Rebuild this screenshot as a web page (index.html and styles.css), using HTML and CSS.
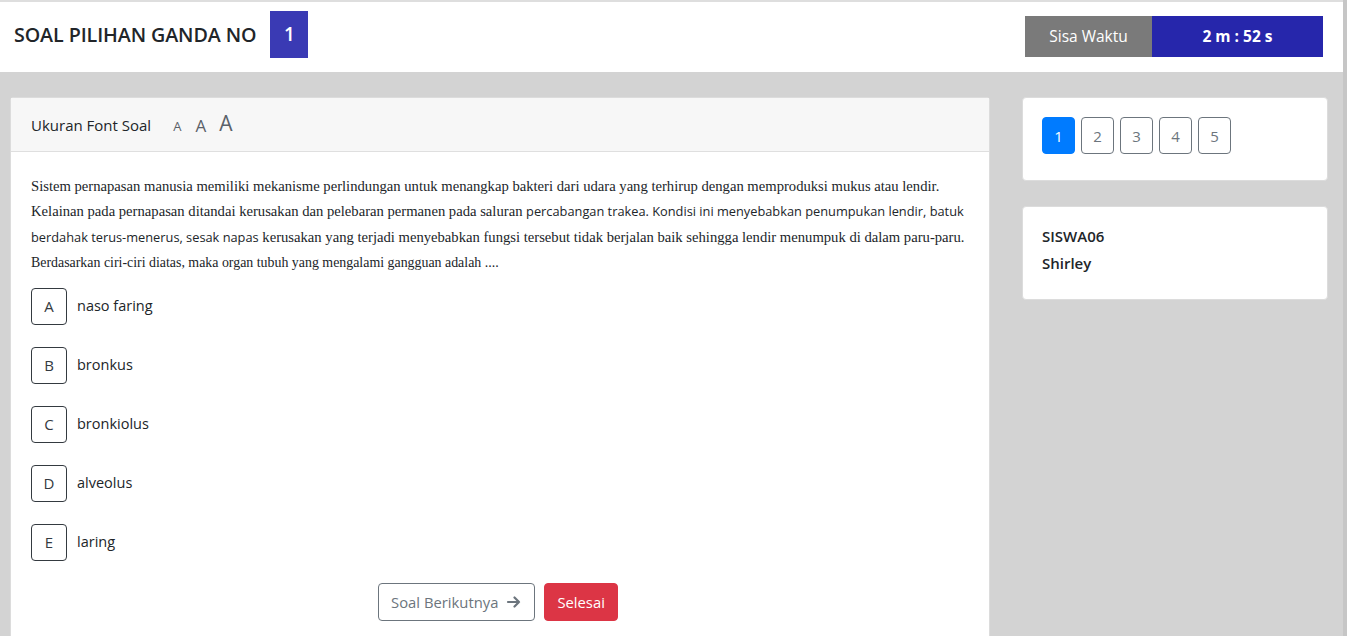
FILE: index.html
```html
<!DOCTYPE html>
<html lang="id">
<head>
    <meta charset="UTF-8">
    <meta name="viewport" content="width=device-width, initial-scale=1.0">
    <title>Ujian - Soal Pilihan Ganda</title>
    <link rel="stylesheet" href="styles.css">
</head>
<body>
    <div id="top-bar">
        <div class="title-wrap">
            <h1>SOAL PILIHAN GANDA NO</h1>
            <span class="no-badge">1</span>
        </div>
        <div class="timer">
            <span class="timer-label">Sisa Waktu</span>
            <span class="timer-value">2 m : 52 s</span>
        </div>
    </div>

    <div id="content">
        <div class="card soal-card">
            <div class="card-header">
                <span>Ukuran Font Soal</span>
                <button class="font-btn small">A</button>
                <button class="font-btn medium">A</button>
                <button class="font-btn large">A</button>
            </div>
            <div class="card-body">
                <p class="soal-text">Sistem pernapasan manusia memiliki mekanisme perlindungan untuk menangkap bakteri dari udara yang terhirup dengan memproduksi mukus atau lendir. Kelainan pada pernapasan ditandai kerusakan dan pelebaran permanen pada saluran <span class="sans">percabangan trakea. Kondisi ini menyebabkan penumpukan lendir, batuk berdahak terus-menerus, sesak napas</span> kerusakan yang terjadi menyebabkan fungsi tersebut tidak berjalan baik sehingga lendir menumpuk di dalam paru-paru. <span class="small-serif">Berdasarkan ciri-ciri diatas, maka organ tubuh yang mengalami gangguan adalah ....</span></p>

                <div class="options">
                    <div class="option">
                        <span class="opt-key">A</span>
                        <span class="opt-text">naso faring</span>
                    </div>
                    <div class="option">
                        <span class="opt-key">B</span>
                        <span class="opt-text">bronkus</span>
                    </div>
                    <div class="option">
                        <span class="opt-key">C</span>
                        <span class="opt-text">bronkiolus</span>
                    </div>
                    <div class="option">
                        <span class="opt-key">D</span>
                        <span class="opt-text">alveolus</span>
                    </div>
                    <div class="option">
                        <span class="opt-key">E</span>
                        <span class="opt-text">laring</span>
                    </div>
                </div>

                <div class="actions">
                    <button class="btn btn-outline">Soal Berikutnya
                        <svg width="16" height="16" viewBox="0 0 16 16"><path d="M2 8h11M8.5 3.5L13 8l-4.5 4.5" fill="none" stroke="currentColor" stroke-width="2.2" stroke-linecap="round" stroke-linejoin="round"/></svg>
                    </button>
                    <button class="btn btn-danger">Selesai</button>
                </div>
            </div>
        </div>

        <div class="side">
            <div class="card nav-card">
                <button class="nav-no active">1</button>
                <button class="nav-no">2</button>
                <button class="nav-no">3</button>
                <button class="nav-no">4</button>
                <button class="nav-no">5</button>
            </div>
            <div class="card user-card">
                <div>SISWA06</div>
                <div>Shirley</div>
            </div>
        </div>
    </div>
</body>
</html>
```

FILE: styles.css
```css
body {
    margin: 0;
    font-family: "Open Sans", "Noto Sans", sans-serif;
    color: #212529;
    background-color: #d3d3d3;
    border-right: 4px solid #c6c6c6;
    height: 636px;
    box-sizing: border-box;
    overflow: hidden;
}

#top-bar {
    background-color: white;
    border-top: 2px solid #dedede;
    height: 70px;
    display: flex;
    justify-content: space-between;
    align-items: center;
}
.title-wrap {
    display: flex;
    align-items: center;
    padding-left: 14px;
    margin-top: -6px;
}
.title-wrap h1 {
    margin: 0;
    font-size: 19.7px;
    font-weight: 600;
    letter-spacing: -0.1px;
}
.no-badge {
    margin-left: 14px;
    width: 38px;
    height: 47px;
    background-color: #3a3ab4;
    color: white;
    font-size: 19px;
    font-weight: 600;
    display: flex;
    align-items: center;
    justify-content: center;
}
.timer {
    display: flex;
    height: 41px;
    margin-right: 20px;
    margin-top: -2px;
    font-size: 15.5px;
    color: white;
}
.timer-label {
    width: 127px;
    background-color: #7a7a7a;
    display: flex;
    align-items: center;
    justify-content: center;
}
.timer-value {
    width: 171px;
    background-color: #2626ab;
    font-weight: 700;
    display: flex;
    align-items: center;
    justify-content: center;
}

#content {
    display: flex;
    gap: 32px;
    padding: 25px 0 0 10px;
}
.card {
    background-color: white;
    border: 1px solid #dcdcdc;
    border-radius: 4px;
}
.soal-card {
    width: 980px;
    height: 560px;
    box-sizing: border-box;
    border-bottom: none;
    border-radius: 4px 4px 0 0;
}
.card-header {
    background-color: #f7f7f7;
    border-bottom: 1px solid #dfdfdf;
    height: 53px;
    display: flex;
    align-items: center;
    padding-left: 20px;
    font-size: 15px;
}
.font-btn {
    background: none;
    border: none;
    padding: 0;
    color: #5a6169;
    font-family: inherit;
    line-height: 1;
    cursor: pointer;
}
.font-btn.small { font-size: 13px; margin-left: 22px; margin-top: 3px; }
.font-btn.medium { font-size: 17px; margin-left: 14px; margin-top: 1px; }
.font-btn.large { font-size: 21px; margin-left: 13px; margin-top: -2px; }

.card-body {
    padding: 22px 20px 13px 20px;
}
.soal-text {
    margin: 0 -10px 0 0;
    font-family: "Liberation Serif", "Times New Roman", serif;
    font-size: 14.65px;
    line-height: 25.4px;
    color: #212529;
}
.soal-text .sans {
    font-family: "Open Sans", "Noto Sans", sans-serif;
    font-size: 12.8px;
    line-height: 1;
}
.soal-text .small-serif {
    font-size: 13.9px;
}
.options {
    margin-top: 12px;
}
.option {
    display: flex;
    align-items: flex-start;
    margin-bottom: 22px;
}
.opt-key {
    width: 34px;
    height: 35px;
    border: 1px solid #343a40;
    border-radius: 4px;
    display: flex;
    align-items: center;
    justify-content: center;
    font-size: 15px;
    color: #343a40;
}
.opt-text {
    margin-left: 10px;
    margin-top: 8px;
    font-size: 14.5px;
    line-height: 20px;
}
.actions {
    display: flex;
    justify-content: center;
    gap: 9px;
    margin-left: -4px;
}
.btn {
    height: 38px;
    border-radius: 4px;
    font-family: inherit;
    font-size: 14.8px;
    padding: 0 12px;
    display: flex;
    align-items: center;
    gap: 8px;
    cursor: pointer;
}
.btn-outline {
    background-color: white;
    border: 1px solid #6c757d;
    color: #6c757d;
}
.btn-danger {
    background-color: #dc3545;
    border: 1px solid #dc3545;
    color: white;
}

.side {
    width: 306px;
    display: flex;
    flex-direction: column;
    gap: 25px;
}
.nav-card {
    height: 84px;
    box-sizing: border-box;
    padding: 19px 19px;
    display: flex;
    gap: 6px;
    align-items: flex-start;
}
.nav-no {
    width: 33px;
    height: 37px;
    border: 1px solid #6c757d;
    border-radius: 4px;
    background-color: white;
    color: #6c757d;
    font-family: inherit;
    font-size: 15px;
    padding: 0;
    cursor: pointer;
}
.nav-no.active {
    background-color: #007bff;
    border-color: #007bff;
    color: white;
}
.user-card {
    height: 94px;
    box-sizing: border-box;
    padding: 16px 19px;
    font-size: 15px;
    font-weight: 600;
    line-height: 27px;
}
```
